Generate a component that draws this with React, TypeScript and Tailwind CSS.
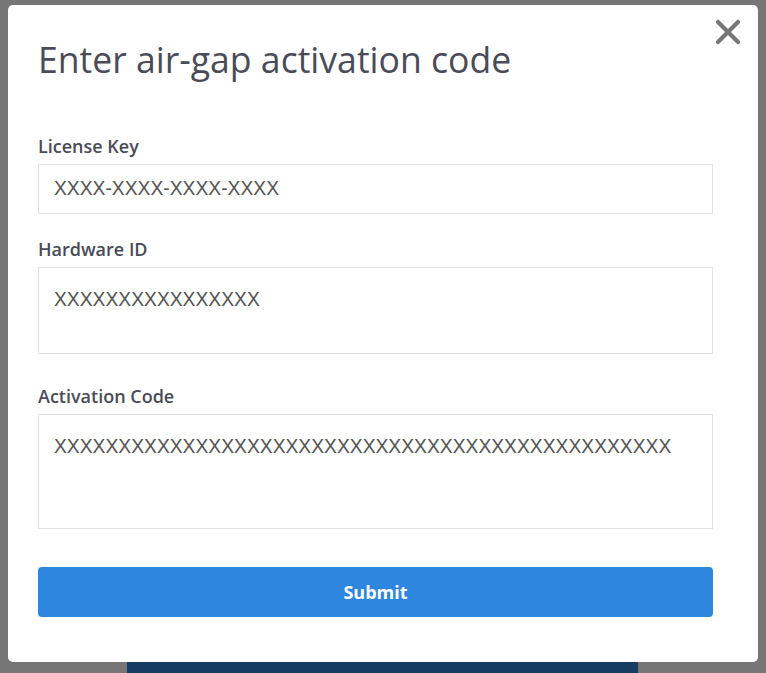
import { X } from 'lucide-react';

const labelCls = 'block text-[18px] leading-[24px] font-semibold text-[#4a4b57] mb-[6px]';
const fieldCls =
  'block w-full border border-[#e2e2e2] bg-white px-[15px] text-[19.3px] text-[#555] font-["Liberation_Sans",Arial,sans-serif] outline-none resize-none';

const App = () => {
  return (
    <div className="relative h-[673px] w-[766px] overflow-hidden bg-[#767676] font-['Open_Sans',sans-serif]">
      <div className="absolute left-[127px] top-[600px] h-[100px] w-[511px] bg-[#173c64]" />

      <div className="relative ml-[8px] mt-[5px] h-[657px] w-[750px] rounded-[5px] bg-white pl-[30px] pr-[45px] pt-[34px]">
        <button className="absolute right-[10px] top-[7px] text-[#777]">
          <X size={40} strokeWidth={2.5} />
        </button>

        <h2 className="text-[35.6px] leading-[40px] text-[#4a4b57]">Enter air-gap activation code</h2>

        <form className="mt-[55px] flex flex-col" onSubmit={(e) => e.preventDefault()}>
          <label className={labelCls}>License Key</label>
          <input readOnly value="XXXX-XXXX-XXXX-XXXX" className={`${fieldCls} h-[50px]`} />

          <label className={`${labelCls} mt-[23px]`}>Hardware ID</label>
          <textarea readOnly value="XXXXXXXXXXXXXXXX" className={`${fieldCls} h-[87px] pt-[18px]`} />

          <label className={`${labelCls} mt-[30px]`}>Activation Code</label>
          <textarea
            readOnly
            value="XXXXXXXXXXXXXXXXXXXXXXXXXXXXXXXXXXXXXXXXXXXXXXXX"
            className={`${fieldCls} h-[115px] pt-[18px]`}
          />

          <button
            type="submit"
            className="mt-[38px] h-[50px] w-full rounded-[4px] bg-[#2e86de] text-[18px] font-bold text-white"
          >
            Submit
          </button>
        </form>
      </div>
    </div>
  );
};

export default App;
